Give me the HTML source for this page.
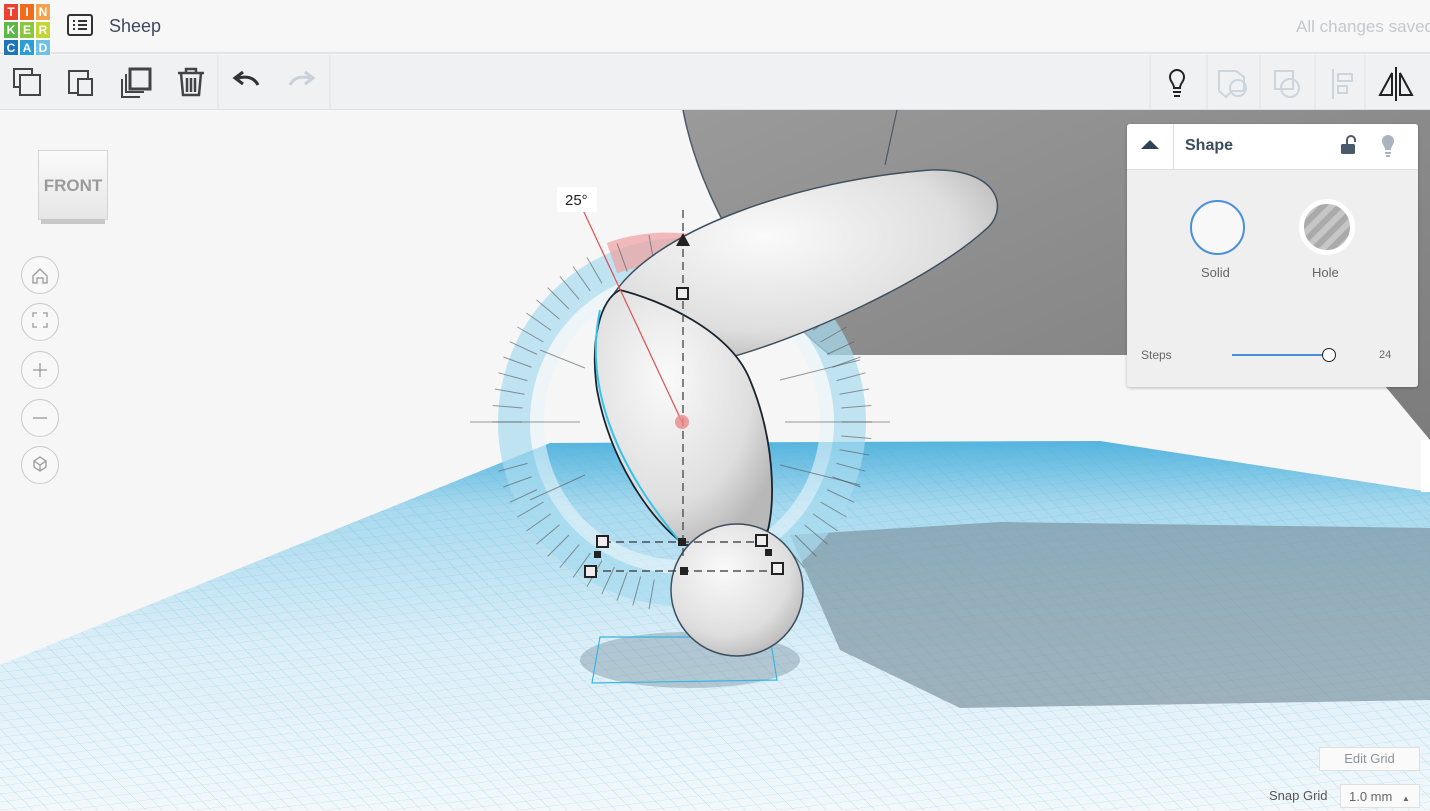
<!DOCTYPE html>
<html><head><meta charset="utf-8"><style>
*{margin:0;padding:0;box-sizing:border-box}
body{width:1430px;height:810px;overflow:hidden;background:#f6f6f6;font-family:"Liberation Sans",sans-serif;position:relative}
.top{position:absolute;left:0;top:0;width:1430px;height:54px;background:#f7f7f8;border-bottom:2px solid #e2e4e8}
.tb{position:absolute;left:0;top:55px;width:1430px;height:55px;background:#f0f1f3;border-bottom:1px solid #dfe1e5}
.logo{position:absolute;left:3px;top:3px;width:48px;height:48px;display:grid;grid-template-columns:repeat(3,16px)}
.logo div{color:#fff;font-weight:bold;font-size:12px;text-align:center;line-height:16px;border:1px solid #fff}
.nav{position:absolute;left:21px;width:38px;height:38px;border:1px solid #c9c9c9;border-radius:50%;background:#f8f8f8}
.panel{position:absolute;left:1127px;top:124px;width:291px;height:263px;background:#efefef;border-radius:3px;box-shadow:0 1px 3px rgba(0,0,0,.25)}
</style></head><body>
<svg width="1430" height="810" style="position:absolute;left:0;top:0">
<defs>
<linearGradient id="gp" x1="0" y1="0" x2="0" y2="1"><stop offset="0" stop-color="#55b4de"/><stop offset="0.18" stop-color="#a8d9ee"/><stop offset="0.55" stop-color="#dbeef7"/><stop offset="1" stop-color="#f2f8fb"/></linearGradient>
<pattern id="grid" width="12" height="12" patternUnits="userSpaceOnUse" patternTransform="matrix(1.2,-0.15,0.6,0.6,0,0)"><path d="M0 0H12M0 0V12" stroke="#4aaed8" stroke-width="0.6" fill="none" opacity="0.55"/></pattern>
<radialGradient id="eg" cx="0.4" cy="0.35" r="0.7"><stop offset="0" stop-color="#fafafa"/><stop offset="0.7" stop-color="#dedede"/><stop offset="1" stop-color="#b8b8b8"/></radialGradient>
<linearGradient id="bg" x1="0" y1="0" x2="1" y2="1"><stop offset="0" stop-color="#9a9a9a"/><stop offset="1" stop-color="#7c7c7c"/></linearGradient>
<line id="tk" x1="682" y1="232" x2="682" y2="262" stroke="#555" stroke-width="1"/>
</defs>
<!-- floor -->
<polygon points="0,665 550,443 1100,441 1430,492 1430,810 0,810" fill="url(#gp)"/>
<polygon points="0,665 550,443 1100,441 1430,492 1430,810 0,810" fill="url(#grid)"/>
<polygon points="790,535 1000,522 1430,528 1430,700 960,708 840,650" fill="#7d95a3" opacity="0.7"/>
<ellipse cx="690" cy="660" rx="110" ry="28" fill="#7d95a3" opacity="0.45"/>
<polygon points="600,637 770,637 777,680 592,683" fill="none" stroke="#3bb5e0" stroke-width="1.2"/>
<!-- body -->
<path d="M683,110 L1430,110 L1430,440 L1380,380 L1330,355 L830,355 C760,300 700,200 683,110Z" fill="url(#bg)"/>
<path d="M683,110 C700,200 760,300 830,355" fill="none" stroke="#4a5a6a" stroke-width="1.5"/>
<path d="M897,110 L885,165" stroke="#4a5a6a" stroke-width="1.2"/>
<!-- ring -->
<circle cx="682" cy="422" r="168" fill="none" stroke="#a8dcf0" stroke-width="32" opacity="0.7"/>
<circle cx="682" cy="422" r="145" fill="none" stroke="#e8f5fa" stroke-width="14" opacity="0.6"/>
<path d="M612,258 A168,168 0 0 1 700,252" fill="none" stroke="#f0a0a0" stroke-width="32" opacity="0.7"/>
<g opacity="0.6">
<use href="#tk" transform="rotate(-90 682 422)"/><use href="#tk" transform="rotate(-80 682 422)"/><use href="#tk" transform="rotate(-70 682 422)"/><use href="#tk" transform="rotate(-60 682 422)"/><use href="#tk" transform="rotate(-50 682 422)"/><use href="#tk" transform="rotate(-40 682 422)"/><use href="#tk" transform="rotate(-30 682 422)"/><use href="#tk" transform="rotate(-20 682 422)"/><use href="#tk" transform="rotate(-10 682 422)"/><use href="#tk" transform="rotate(10 682 422)"/><use href="#tk" transform="rotate(20 682 422)"/><use href="#tk" transform="rotate(30 682 422)"/><use href="#tk" transform="rotate(40 682 422)"/><use href="#tk" transform="rotate(50 682 422)"/><use href="#tk" transform="rotate(60 682 422)"/><use href="#tk" transform="rotate(70 682 422)"/><use href="#tk" transform="rotate(80 682 422)"/><use href="#tk" transform="rotate(90 682 422)"/><use href="#tk" transform="rotate(100 682 422)"/><use href="#tk" transform="rotate(110 682 422)"/><use href="#tk" transform="rotate(120 682 422)"/><use href="#tk" transform="rotate(130 682 422)"/><use href="#tk" transform="rotate(140 682 422)"/><use href="#tk" transform="rotate(150 682 422)"/><use href="#tk" transform="rotate(160 682 422)"/><use href="#tk" transform="rotate(170 682 422)"/><use href="#tk" transform="rotate(190 682 422)"/><use href="#tk" transform="rotate(200 682 422)"/><use href="#tk" transform="rotate(210 682 422)"/><use href="#tk" transform="rotate(220 682 422)"/><use href="#tk" transform="rotate(230 682 422)"/><use href="#tk" transform="rotate(240 682 422)"/><use href="#tk" transform="rotate(250 682 422)"/>
<use href="#tk" transform="rotate(-85 682 422)"/><use href="#tk" transform="rotate(-75 682 422)"/><use href="#tk" transform="rotate(-65 682 422)"/><use href="#tk" transform="rotate(-55 682 422)"/><use href="#tk" transform="rotate(-45 682 422)"/><use href="#tk" transform="rotate(-35 682 422)"/><use href="#tk" transform="rotate(-25 682 422)"/><use href="#tk" transform="rotate(25 682 422)"/><use href="#tk" transform="rotate(35 682 422)"/><use href="#tk" transform="rotate(45 682 422)"/><use href="#tk" transform="rotate(55 682 422)"/><use href="#tk" transform="rotate(65 682 422)"/><use href="#tk" transform="rotate(75 682 422)"/><use href="#tk" transform="rotate(85 682 422)"/><use href="#tk" transform="rotate(95 682 422)"/><use href="#tk" transform="rotate(105 682 422)"/><use href="#tk" transform="rotate(115 682 422)"/><use href="#tk" transform="rotate(125 682 422)"/><use href="#tk" transform="rotate(135 682 422)"/><use href="#tk" transform="rotate(145 682 422)"/><use href="#tk" transform="rotate(155 682 422)"/><use href="#tk" transform="rotate(165 682 422)"/><use href="#tk" transform="rotate(195 682 422)"/><use href="#tk" transform="rotate(205 682 422)"/><use href="#tk" transform="rotate(215 682 422)"/><use href="#tk" transform="rotate(225 682 422)"/><use href="#tk" transform="rotate(235 682 422)"/><use href="#tk" transform="rotate(245 682 422)"/><use href="#tk" transform="rotate(255 682 422)"/>
</g>
<g stroke="#555" stroke-width="1" opacity="0.6">
<line x1="470" y1="422" x2="580" y2="422"/><line x1="785" y1="422" x2="890" y2="422"/>
<line x1="540" y1="350" x2="585" y2="368"/><line x1="780" y1="380" x2="860" y2="360"/>
<line x1="530" y1="500" x2="585" y2="475"/><line x1="780" y1="465" x2="860" y2="485"/>
</g>
<!-- top ellipsoid -->
<path d="M610,300 C650,230 800,180 930,170 C1000,168 1010,210 985,230 C930,280 800,340 720,360 C690,370 630,330 610,300Z" fill="url(#eg)" stroke="#3d5060" stroke-width="1.5"/>
<!-- leg -->
<path d="M620,290 C660,300 730,330 750,380 C775,440 775,500 768,530 C740,545 700,545 685,545 C650,520 610,460 597,390 C590,340 600,300 620,290Z" fill="url(#eg)" stroke="#1a2430" stroke-width="1.8"/>
<path d="M600,310 C585,380 610,460 683,545" fill="none" stroke="#35c4ec" stroke-width="2"/>
<!-- foot -->
<circle cx="737" cy="590" r="66" fill="url(#eg)" stroke="#3d5060" stroke-width="1.5"/>
<!-- gizmo -->
<line x1="683" y1="210" x2="683" y2="560" stroke="#444" stroke-width="1.3" stroke-dasharray="8,5"/>
<polygon points="676,246 690,246 683,233" fill="#222"/>
<line x1="583" y1="210" x2="682" y2="422" stroke="#e05050" stroke-width="1.2"/>
<circle cx="682" cy="422" r="7" fill="#e88" opacity="0.8"/>
<rect x="557" y="187" width="40" height="25" fill="#fff" rx="2"/>
<text x="565" y="205" font-size="15" fill="#222">25°</text>
<g fill="none" stroke="#333" stroke-width="1.2" stroke-dasharray="8,5"><path d="M603,542 H762"/><path d="M590,571 H778"/></g>
<g fill="#eee" stroke="#222" stroke-width="2">
<rect x="677" y="288" width="11" height="11"/><rect x="597" y="536" width="11" height="11"/><rect x="756" y="535" width="11" height="11"/><rect x="585" y="566" width="11" height="11"/><rect x="772" y="563" width="11" height="11"/></g>
<g fill="#222"><rect x="678" y="538" width="8" height="8"/><rect x="680" y="567" width="8" height="8"/><rect x="594" y="551" width="7" height="7"/><rect x="765" y="549" width="7" height="7"/></g>
</svg>
<div class="top">
<div class="logo">
<div style="background:#e9422e">T</div><div style="background:#f26b1d">I</div><div style="background:#f4a24b">N</div>
<div style="background:#5bb846">K</div><div style="background:#8cc63f">E</div><div style="background:#c4d534">R</div>
<div style="background:#1b75bb">C</div><div style="background:#2a9ed8">A</div><div style="background:#6cc1e6">D</div></div>
<svg style="position:absolute;left:67px;top:14px" width="26" height="24"><rect x="1" y="1" width="24" height="20" rx="2" fill="none" stroke="#333" stroke-width="2"/><path d="M6 7h2M11 7h9M6 11h2M11 11h9M6 15h2M11 15h9" stroke="#333" stroke-width="2"/></svg>
<div style="position:absolute;left:109px;top:16px;font-size:18px;color:#3c4b5c">Sheep</div>
<div style="position:absolute;left:1296px;top:17px;font-size:17px;color:#c3c8cf;white-space:nowrap">All changes saved</div>
</div>
<div class="tb">
<svg width="1430" height="55" style="position:absolute;left:0;top:0" fill="none" stroke-width="2">
<g stroke="#444"><rect x="14" y="14" width="18" height="18"/><rect x="20" y="20" width="20" height="20" fill="#f0f1f3"/>
<rect x="69" y="16" width="19" height="22"/><rect x="78" y="24" width="14" height="16" fill="#f0f1f3"/>
<rect x="130" y="14" width="20" height="20" stroke-width="3"/><path d="M126 19v18h18M122 24v18h18"/>
<path d="M178 18h26M186 18v-4h10v4M181 18l2 22h16l2-22M187 23v14M191 23v14M195 23v14" stroke-width="2.5"/></g>
<path d="M218 0v55M330 0v55M1150 0v55M1207 0v55M1260 0v55M1315 0v55M1365 0v55" stroke="#dfe1e5" stroke-width="1"/>
<path d="M258 30c-4-8-12-9-20-7M243 17l-8 6 8 6" stroke="#333" stroke-width="3"/>
<path d="M290 30c4-8 12-9 20-7M305 17l8 6-8 6" stroke="#c8d0d8" stroke-width="3"/>
<path d="M1170 22a7 7 0 1 1 14 0c0 5-4 6-4 11h-6c0-5-4-6-4-11M1173 37h8M1174 41h6" stroke="#222"/>
<path d="M1219 16h17l8 6v14h-12l-6 6-7-6z" stroke="#ccd4dc"/><circle cx="1238" cy="33" r="8" stroke="#ccd4dc"/>
<rect x="1275" y="16" width="18" height="18" stroke="#ccd4dc"/><circle cx="1290" cy="33" r="9" stroke="#ccd4dc"/>
<path d="M1333 14v30M1338 19h14v7h-14zM1338 31h9v7h-9z" stroke="#ccd4dc"/>
<path d="M1396 12v34M1392 18l-12 22h12zM1400 18l12 22h-12z" stroke="#222"/>
</svg></div>
<div style="position:absolute;left:38px;top:150px;width:70px;height:70px;background:linear-gradient(#fafafa,#e6e6e6);border:1px solid #d4d4d4;font-weight:bold;color:#9a9a9a;font-size:17px;text-align:center;line-height:70px">FRONT</div>
<div style="position:absolute;left:41px;top:219px;width:64px;height:5px;background:#c8c8c8"></div>
<div class="nav" style="top:256px"></div><div class="nav" style="top:303px"></div><div class="nav" style="top:351px"></div><div class="nav" style="top:399px"></div><div class="nav" style="top:446px"></div>
<svg width="60" height="240" style="position:absolute;left:10px;top:255px" fill="none" stroke="#999" stroke-width="1.3">
<path d="M23 21l7-7 7 7v7h-4v-5h-6v5h-4z"/><path d="M23 62v-4h4M33 58h4v4M37 68v4h-4M27 72h-4v-4"/>
<path d="M30 108v14M23 115h14"/><path d="M23 163h14"/><path d="M24 206l6-4 6 4v6l-6 4-6-4zM24 206l6 4 6-4M30 210v6"/></svg>
<div class="panel">
<div style="height:46px;background:#fff;border-bottom:1px solid #e0e0e0;border-radius:3px 3px 0 0;position:relative">
<div style="position:absolute;left:46px;top:0;width:1px;height:46px;background:#e0e0e0"></div>
<svg style="position:absolute;left:14px;top:15px" width="18" height="12"><polygon points="0,10 9,1 18,10" fill="#2f4256"/></svg>
<div style="position:absolute;left:58px;top:13px;font-size:16px;font-weight:bold;color:#3c4b5c">Shape</div>
<svg style="position:absolute;left:212px;top:9px" width="20" height="24"><path d="M8 11V7a4 4 0 0 1 8 0v2" stroke="#4a5a6a" stroke-width="2" fill="none"/><rect x="2" y="11" width="14" height="10" rx="1.5" fill="#4a5a6a"/></svg>
<svg style="position:absolute;left:252px;top:8px" width="18" height="26"><path d="M3 9a6 6 0 1 1 12 0c0 4-3 5-3 9H6c0-4-3-5-3-9z" fill="#aab4be"/><path d="M6 21h6M7 24h4" stroke="#aab4be" stroke-width="2"/></svg></div>
<div style="position:absolute;left:63px;top:76px;width:55px;height:55px;border-radius:50%;border:2.5px solid #4a8fdc;background:#f8f8f8"></div>
<div style="position:absolute;left:172px;top:75px;width:56px;height:56px;border-radius:50%;border:5px solid #fff;background:repeating-linear-gradient(135deg,#aaa 0 6px,#c6c6c6 6px 12px)"></div>
<div style="position:absolute;left:74px;top:141px;font-size:13px;color:#666">Solid</div>
<div style="position:absolute;left:185px;top:141px;font-size:13px;color:#666">Hole</div>
<div style="position:absolute;left:14px;top:224px;font-size:12px;color:#666">Steps</div>
<div style="position:absolute;left:105px;top:230px;width:95px;height:2px;background:#4a8fdc"></div>
<div style="position:absolute;left:195px;top:224px;width:14px;height:14px;border-radius:50%;border:1.5px solid #222;background:#fff"></div>
<div style="position:absolute;left:252px;top:225px;font-size:11px;color:#666">24</div>
</div>
<div style="position:absolute;left:1421px;top:440px;width:9px;height:52px;background:#fff"></div>
<div style="position:absolute;left:1319px;top:747px;width:101px;height:24px;background:#fafafa;border:1px solid #e0e0e0;font-size:13px;color:#8a939c;text-align:center;line-height:22px">Edit Grid</div>
<div style="position:absolute;left:1269px;top:788px;font-size:13px;color:#555">Snap Grid</div>
<div style="position:absolute;left:1340px;top:784px;width:80px;height:24px;background:#fafafa;border:1px solid #e0e0e0;font-size:13px;color:#666;line-height:24px;padding-left:8px">1.0 mm <span style="font-size:8px;margin-left:6px">▲</span></div>
</body></html>
